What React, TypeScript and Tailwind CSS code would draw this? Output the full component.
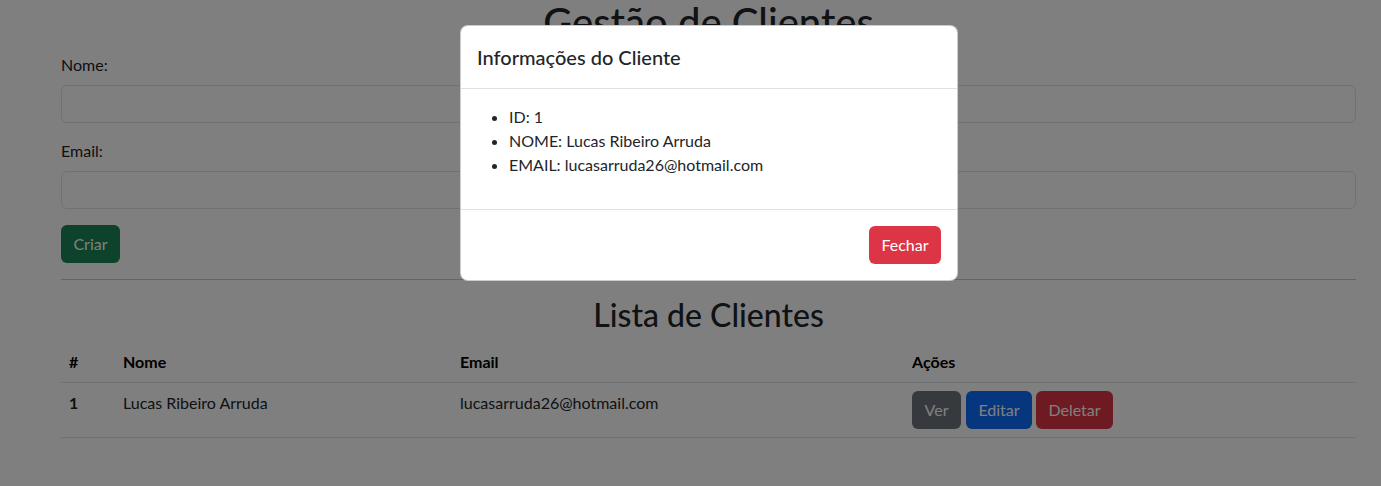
import React from "react";

const font = { fontFamily: '"Lato", "Open Sans", sans-serif' };

export default function App() {
  return (
    <div className="relative w-[1381px] h-[486px] overflow-hidden bg-white text-[#212529] text-[16px] leading-[24px]" style={font}>
      <div className="pl-[61px] pr-[25px]">
        <h1 className="text-center text-[40px] leading-[48px] font-medium mt-[-2px] mb-[7px]">Gestão de Clientes</h1>
        <div className="mb-4">
          <label className="block mb-2">Nome:</label>
          <div className="h-[38px] rounded-[6px] border border-[#dee2e6] bg-white"></div>
        </div>
        <div className="mb-4">
          <label className="block mb-2">Email:</label>
          <div className="h-[38px] rounded-[6px] border border-[#dee2e6] bg-white"></div>
        </div>
        <button className="h-[38px] w-[59px] rounded-[6px] bg-[#198754] text-white">Criar</button>
        <hr className="my-4 border-t border-[#212529]/25" />
        <h2 className="text-center text-[32px] leading-[38px] font-medium mb-2">Lista de Clientes</h2>
        <table className="w-full table-fixed border-collapse">
          <colgroup>
            <col className="w-[54px]" />
            <col className="w-[337px]" />
            <col className="w-[452px]" />
            <col />
          </colgroup>
          <thead>
            <tr className="border-b border-[#dee2e6]">
              <th className="text-left font-bold p-2 text-black">#</th>
              <th className="text-left font-bold p-2 text-black">Nome</th>
              <th className="text-left font-bold p-2 text-black">Email</th>
              <th className="text-left font-bold p-2 text-black">Ações</th>
            </tr>
          </thead>
          <tbody>
            <tr className="border-b border-[#dee2e6]">
              <td className="p-2 font-bold align-top">1</td>
              <td className="p-2 align-top">Lucas Ribeiro Arruda</td>
              <td className="p-2 align-top">lucasarruda26@hotmail.com</td>
              <td className="p-2 align-top">
                <div className="flex">
                  <button className="h-[38px] w-[49px] rounded-[6px] bg-[#6c757d] text-white">Ver</button>
                  <button className="ml-[5px] h-[38px] w-[66px] rounded-[6px] bg-[#0d6efd] text-white">Editar</button>
                  <button className="ml-[4px] h-[38px] w-[77px] rounded-[6px] bg-[#dc3545] text-white">Deletar</button>
                </div>
              </td>
            </tr>
          </tbody>
        </table>
      </div>

      <div className="absolute inset-0 bg-black/50"></div>

      <div className="absolute left-[460px] top-[25px] w-[498px] rounded-[8px] border border-black/20 bg-white">
        <div className="px-4 py-4 border-b border-[#dee2e6]">
          <h5 className="text-[20px] leading-[30px] font-medium">Informações do Cliente</h5>
        </div>
        <div className="p-4">
          <ul className="list-disc pl-8 mb-4">
            <li>ID: 1</li>
            <li>NOME: Lucas Ribeiro Arruda</li>
            <li>EMAIL: lucasarruda26@hotmail.com</li>
          </ul>
        </div>
        <div className="flex justify-end p-3 border-t border-[#dee2e6]">
          <button className="m-1 h-[38px] w-[72px] rounded-[6px] bg-[#dc3545] text-white">Fechar</button>
        </div>
      </div>
    </div>
  );
}
